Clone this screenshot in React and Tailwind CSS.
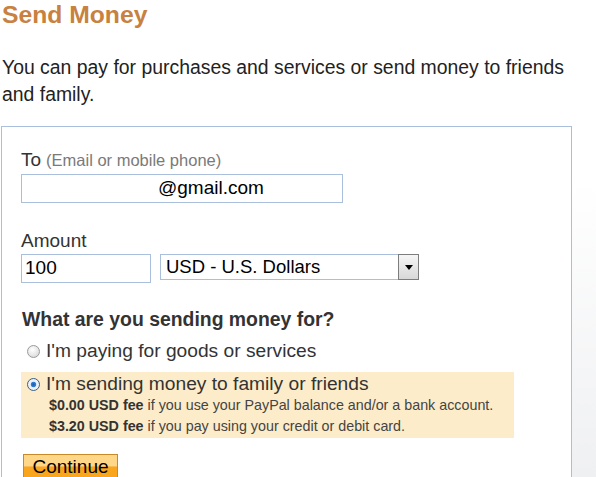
import { useState } from "react";

const Radio = ({ checked, onClick }) => (
  <span
    onClick={onClick}
    className={`inline-block w-[13px] h-[13px] rounded-full border shrink-0 ${
      checked
        ? "border-[#3a5f86] bg-[radial-gradient(circle,#1d5fa8_0,#2f7fd0_30%,#e9eef4_40%,#f7f9fb_100%)]"
        : "border-[#9a9a9a] bg-[radial-gradient(circle_at_40%_35%,#ffffff_0,#e4e4e4_60%,#cfcfcf_100%)]"
    }`}
  />
);

const App = () => {
  const [purpose, setPurpose] = useState("family");

  return (
    <div className="flex w-[596px] h-[477px] overflow-hidden bg-white font-['Liberation_Sans',Arial,sans-serif] text-[#333]">
      <div className="w-[572px] shrink-0">
        <h1 className="pl-[2px] pt-[1px] text-[24.7px] leading-[28px] font-bold text-[#c8813f]">
          Send Money
        </h1>
        <p className="pl-[2px] mt-[25px] text-[19.4px] leading-[27px] text-[#222] w-[565px]">
          You can pay for purchases and services or send money to friends and family.
        </p>

        <div className="mt-[18px] ml-[1px] border border-[#a9bfdb] border-b-0 h-[360px] pl-[19px] pt-[23px]">
          <div className="flex items-baseline gap-[5px] leading-[20px]">
            <span className="text-[19px] text-[#333]">To</span>
            <span className="text-[16.5px] text-[#7a7a7a]">(Email or mobile phone)</span>
          </div>
          <div className="mt-[4px] w-[322px] h-[29px] border border-[#a9bfdb] flex items-center pl-[136px] text-[19px] text-black">
            @gmail.com
          </div>

          <div className="mt-[28px] text-[19px] leading-[20px] text-[#333]">Amount</div>
          <div className="mt-[3px] flex items-start gap-[9px]">
            <div className="w-[130px] h-[29px] border border-[#a9bfdb] flex items-center pl-[3px] text-[19px] text-black">
              100
            </div>
            <div className="w-[259px] h-[26px] border border-[#a9bfdb] flex items-center text-[18.5px] text-black">
              <span className="flex-1 pl-[5px]">USD - U.S. Dollars</span>
              <span className="w-[21px] h-[26px] -my-px -mr-px border border-[#7d7d7d] bg-gradient-to-b from-[#f6f6f6] to-[#d8d8d8] flex items-center justify-center">
                <span className="w-0 h-0 border-l-[4px] border-r-[4px] border-t-[5px] border-l-transparent border-r-transparent border-t-black" />
              </span>
            </div>
          </div>

          <div className="mt-[25px] text-[19.4px] leading-[22px] font-bold text-[#333] pl-[1px]">
            What are you sending money for?
          </div>

          <label
            className="mt-[10px] flex items-center gap-[6px] pl-[6px] text-[19.2px] leading-[22px] text-[#333] cursor-pointer"
            onClick={() => setPurpose("goods")}
          >
            <Radio checked={purpose === "goods"} />
            I'm paying for goods or services
          </label>

          <div
            className={`mt-[10px] w-[493px] h-[66px] pt-[1px] ${
              purpose === "family" ? "bg-[#fdecc9]" : ""
            }`}
          >
            <label
              className="flex items-center gap-[6px] pl-[6px] text-[19.2px] leading-[22px] text-[#333] cursor-pointer"
              onClick={() => setPurpose("family")}
            >
              <Radio checked={purpose === "family"} />
              I'm sending money to family or friends
            </label>
            <div className="pl-[28px] text-[14.3px] leading-[21px] text-[#444]">
              <div>
                <b className="text-[#333]">$0.00 USD fee</b> if you use your PayPal balance and/or a bank account.
              </div>
              <div>
                <b className="text-[#333]">$3.20 USD fee</b> if you pay using your credit or debit card.
              </div>
            </div>
          </div>

          <button className="mt-[16px] ml-[2px] w-[95px] h-[26px] border border-[#c88a28] bg-gradient-to-b from-[#ffd789] from-45% to-[#f9a51d] to-50% text-[19px] leading-[22px] text-black">
            Continue
          </button>
        </div>
      </div>
      <div className="flex-1 mt-[180px] bg-gradient-to-b from-white to-[#eff0f2]" />
    </div>
  );
};

export default App;
